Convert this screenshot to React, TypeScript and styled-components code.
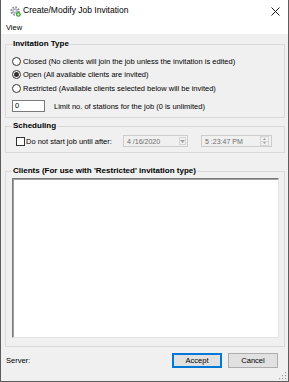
import styled, { createGlobalStyle } from 'styled-components';

const GlobalStyle = createGlobalStyle`
  html, body { margin: 0; padding: 0; background: #f0f0f0; }
  * { box-sizing: border-box; }
`;

export default function App() {
  return (
    <>
      <GlobalStyle />
      <Window>
        <TitleBar>
          <TitleIcon />
          <Title>Create/Modify Job Invitation</Title>
          <CloseIcon />
        </TitleBar>
        <MenuBar>
          <MenuItem>View</MenuItem>
        </MenuBar>
        <Body>
          <Group>
            <Legend>Invitation Type</Legend>
            <OptionRow $top={6}>
              <Radio />
              <span>Closed (No clients will join the job unless the invitation is edited)</span>
            </OptionRow>
            <OptionRow $top={0}>
              <Radio $checked />
              <span>Open (All available clients are invited)</span>
            </OptionRow>
            <OptionRow $top={1}>
              <Radio />
              <span>Restricted (Available clients selected below will be invited)</span>
            </OptionRow>
            <LimitRow>
              <NumberBox>0</NumberBox>
              <span>Limit no. of stations for the job (0 is unlimited)</span>
            </LimitRow>
          </Group>

          <Group $gap={3} $padBottom={5}>
            <Legend>Scheduling</Legend>
            <ScheduleRow>
              <CheckLabel>
                <CheckBox />
                <span>Do not start job until after:</span>
              </CheckLabel>
              <Picker $width={65}>
                <PickerText>4 /16/2020</PickerText>
                <DropButton>
                  <svg width="5" height="3" viewBox="0 0 5 3">
                    <path d="M0 0 L5 0 L2.5 3 Z" fill="#a0a0a0" />
                  </svg>
                </DropButton>
              </Picker>
              <Picker $width={71} $left={13}>
                <PickerText>5 :23:47 PM</PickerText>
                <Spin>
                  <SpinHalf>
                    <svg width="3" height="2" viewBox="0 0 3 2"><path d="M0 2 L3 2 L1.5 0 Z" fill="#a0a0a0" /></svg>
                  </SpinHalf>
                  <SpinHalf>
                    <svg width="3" height="2" viewBox="0 0 3 2"><path d="M0 0 L3 0 L1.5 2 Z" fill="#a0a0a0" /></svg>
                  </SpinHalf>
                </Spin>
              </Picker>
            </ScheduleRow>
          </Group>

          <Group $gap={13} $padBottom={8}>
            <Legend>Clients (For use with 'Restricted' invitation type)</Legend>
            <ClientList />
          </Group>

          <Footer>
            <ServerLabel>Server:</ServerLabel>
            <Button $primary>Accept</Button>
            <Button>Cancel</Button>
          </Footer>
        </Body>
        <Grip />
      </Window>
    </>
  );
}

function TitleIcon() {
  return (
    <IconWrap>
      <svg width="11" height="11" viewBox="0 0 11 11">
        <circle cx="5" cy="5" r="3.6" fill="none" stroke="#8a8f99" strokeWidth="2.2" strokeDasharray="1.6 1.2" />
        <circle cx="5" cy="5" r="2.6" fill="#b4b8c0" />
        <circle cx="5" cy="5" r="1.1" fill="#eef0f2" />
        <circle cx="8.4" cy="8.4" r="2.4" fill="#3aa335" />
        <path d="M8.4 7.2 V9.6 M7.2 8.4 H9.6" stroke="#fff" strokeWidth="0.8" />
      </svg>
    </IconWrap>
  );
}

function CloseIcon() {
  return (
    <CloseWrap>
      <svg width="9" height="9" viewBox="0 0 9 9">
        <path d="M0.5 0.5 L8.5 8.5 M8.5 0.5 L0.5 8.5" stroke="#1a1a1a" strokeWidth="1" />
      </svg>
    </CloseWrap>
  );
}

function Grip() {
  const dots = [
    [7, 1], [7, 4], [4, 4], [7, 7], [4, 7], [1, 7],
  ];
  return (
    <GripWrap>
      <svg width="9" height="9" viewBox="0 0 9 9">
        {dots.map(([x, y]) => (
          <rect key={`${x}-${y}`} x={x} y={y} width="1.2" height="1.2" fill="#9a9a9a" />
        ))}
      </svg>
    </GripWrap>
  );
}

const Window = styled.div`
  position: relative;
  width: 289px;
  height: 382px;
  display: flex;
  flex-direction: column;
  background: #f0f0f0;
  border: 1px solid #5c5c5c;
  border-top: none;
  font-family: "Liberation Sans", Arial, sans-serif;
  font-size: 7.5px;
  color: #000;
`;

const TitleBar = styled.div`
  height: 21px;
  display: flex;
  align-items: center;
  background: #fff;
  padding-left: 9px;
`;

const IconWrap = styled.div`
  width: 11px;
  height: 11px;
  display: flex;
  margin-top: 1px;
`;

const Title = styled.div`
  flex: 1;
  margin-left: 2px;
  font-size: 8.5px;
  color: #000;
  line-height: 11px;
`;

const CloseWrap = styled.div`
  width: 9px;
  height: 9px;
  display: flex;
  margin-right: 8px;
  margin-top: 1px;
`;

const MenuBar = styled.div`
  height: 13px;
  display: flex;
  align-items: center;
  background: #fff;
  padding-left: 5px;
`;

const MenuItem = styled.span`
  font-size: 7.5px;
  line-height: 10px;
`;

const Body = styled.div`
  flex: 1;
  display: flex;
  flex-direction: column;
  padding: 5px 3px 0 4px;
`;

const Group = styled.fieldset<{ $gap?: number; $padBottom?: number }>`
  margin: ${(p) => p.$gap ?? 0}px 0 0 0;
  padding: 0 5px ${(p) => p.$padBottom ?? 5}px 6px;
  border: 1px solid #d9d9d9;
  min-width: 0;
`;

const Legend = styled.legend`
  padding: 0 1px;
  margin-left: 0;
  font-size: 8px;
  font-weight: bold;
  line-height: 10px;
`;

const OptionRow = styled.label<{ $top: number }>`
  display: flex;
  align-items: center;
  height: 13px;
  margin-top: ${(p) => p.$top}px;
  white-space: nowrap;
`;

const Radio = styled.span<{ $checked?: boolean }>`
  width: 9px;
  height: 9px;
  border-radius: 50%;
  border: 1px solid #333;
  background: #fff;
  margin-right: 2px;
  display: flex;
  align-items: center;
  justify-content: center;
  &::after {
    content: '';
    width: 5px;
    height: 5px;
    border-radius: 50%;
    background: ${(p) => (p.$checked ? '#333' : 'transparent')};
  }
`;

const LimitRow = styled.div`
  display: flex;
  align-items: center;
  gap: 9px;
  height: 12px;
  margin-top: 5px;
  white-space: nowrap;
`;

const NumberBox = styled.div`
  width: 33px;
  height: 12px;
  border: 1px solid #7a7a7a;
  background: #fff;
  padding-left: 2px;
  line-height: 10px;
`;

const ScheduleRow = styled.div`
  display: flex;
  align-items: center;
  height: 12px;
  margin-top: 4px;
  white-space: nowrap;
`;

const CheckLabel = styled.label`
  width: 111px;
  display: flex;
  align-items: center;
  padding-left: 4px;
`;

const CheckBox = styled.span`
  width: 9px;
  height: 9px;
  border: 1px solid #333;
  background: #fff;
  margin-right: 1px;
`;

const Picker = styled.div<{ $width: number; $left?: number }>`
  width: ${(p) => p.$width}px;
  height: 12px;
  margin-left: ${(p) => p.$left ?? 0}px;
  border: 1px solid #cccccc;
  background: #f0f0f0;
  display: flex;
  align-items: center;
  padding: 0 1px 0 3px;
`;

const PickerText = styled.span`
  flex: 1;
  color: #6d6d6d;
  font-size: 7px;
`;

const DropButton = styled.span`
  width: 7px;
  height: 8px;
  border: 1px solid #d6d6d6;
  display: flex;
  align-items: center;
  justify-content: center;
`;

const Spin = styled.span`
  width: 9px;
  height: 10px;
  display: flex;
  flex-direction: column;
  margin-right: 1px;
`;

const SpinHalf = styled.span`
  flex: 1;
  border: 1px solid #d6d6d6;
  display: flex;
  align-items: center;
  justify-content: center;
  & + & { border-top: none; }
`;

const ClientList = styled.div`
  margin-top: 2px;
  height: 160px;
  background: #fff;
  border: 1px solid;
  border-color: #7a7a7a #e3e3e3 #e3e3e3 #7a7a7a;
  box-shadow: inset 1px 1px 0 #a0a0a0;
`;

const Footer = styled.div`
  display: flex;
  align-items: center;
  gap: 6px;
  margin-top: 6px;
  padding-right: 7px;
  height: 15px;
`;

const ServerLabel = styled.span`
  flex: 1;
  padding-left: 1px;
`;

const Button = styled.button<{ $primary?: boolean }>`
  width: 50px;
  height: 15px;
  padding: 0;
  font-family: "Liberation Sans", Arial, sans-serif;
  font-size: 7.5px;
  color: #000;
  background: #e1e1e1;
  border: 1px solid ${(p) => (p.$primary ? '#0078d7' : '#adadad')};
  box-shadow: ${(p) => (p.$primary ? 'inset 0 0 0 1px #0078d7' : 'none')};
`;

const GripWrap = styled.div`
  position: absolute;
  right: 1px;
  bottom: 1px;
  width: 9px;
  height: 9px;
  display: flex;
`;
